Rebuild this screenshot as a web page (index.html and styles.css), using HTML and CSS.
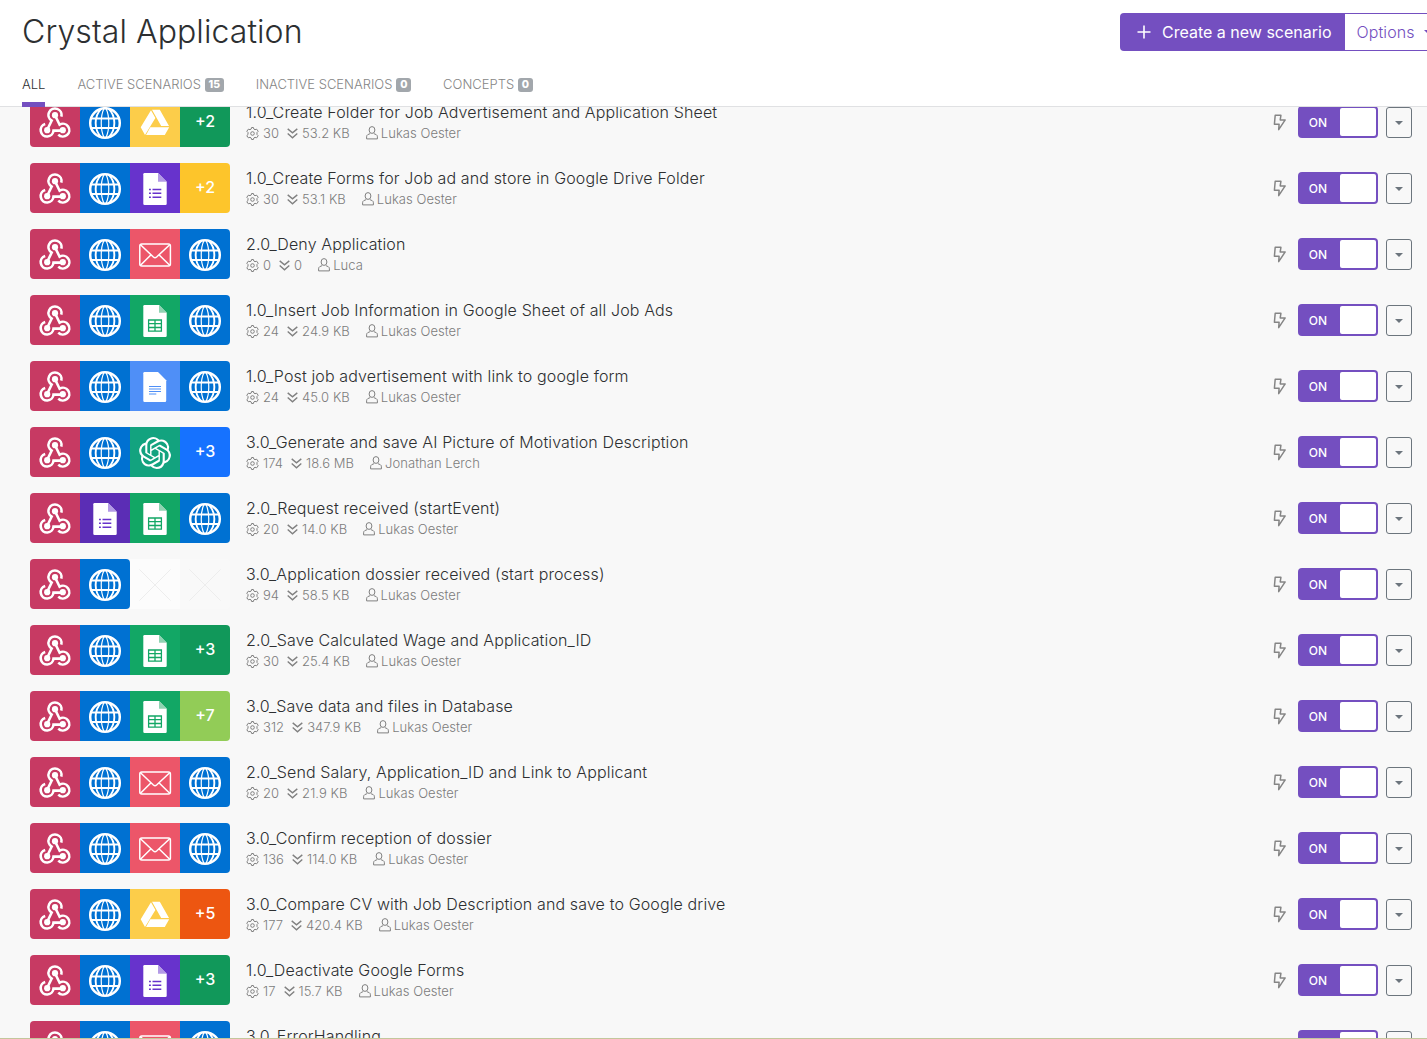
FILE: index.html
```html
<!DOCTYPE html>
<html lang="en">
<head>
<meta charset="utf-8">
<title>Crystal Application</title>
<link rel="stylesheet" href="styles.css">
</head>
<body>
<svg class="sprite" aria-hidden="true">
  <symbol id="hook" viewBox="0 0 50 50">
    <g fill="none" stroke="#fff" stroke-width="2.6">
      <path d="M31.3 19.6A6.5 6.5 0 1 0 21.7 23.6L17.6 32"/>
      <path d="M15.2 27A6.4 6.4 0 1 0 23.5 33.6H32.7"/>
      <path d="M25 18.2L29.6 27.7A6.4 6.4 0 1 1 28.3 37.6"/>
    </g>
    <g fill="#fff"><circle cx="25" cy="18.2" r="3.1"/><circle cx="17.2" cy="33.2" r="3.1"/><circle cx="32.8" cy="33.2" r="3.1"/></g>
  </symbol>
  <symbol id="globe" viewBox="0 0 50 50">
    <g fill="none" stroke="#fff">
      <circle cx="25" cy="26" r="14.8" stroke-width="2.5"/>
      <path stroke-width="1.9" d="M10.500 21.500H39.500M10.500 31H39.500M21.500 11.600C13.700 19 13.700 33 21.500 40.400M28.500 11.600C36.300 19 36.300 33 28.500 40.400"/>
      <path stroke-width="1.2" d="M24 11.600C20.300 19 20.300 33 24 40.400M26 11.600C29.700 19 29.700 33 26 40.400"/>
    </g>
  </symbol>
  <symbol id="forms" viewBox="0 0 50 50">
    <path fill="#fff" d="M14.500 10H28L36.700 18.700V40.800Q36.700 42 35.500 42H14.500Q13.300 42 13.300 40.800V11.200Q13.300 10 14.500 10Z"/>
    <path fill="#b39ae6" d="M28 10L36.700 18.700H28Z"/>
    <path stroke="#6733cc" stroke-width="1.500" d="M19 26.500H20.900M22.500 26.500H31.300M19 30.300H20.900M22.500 30.300H31.300M19 34.200H20.900M22.500 34.200H31.300"/>
  </symbol>
  <symbol id="sheets" viewBox="0 0 50 50">
    <path fill="#fff" d="M14.500 10H29L36.700 17.700V40.800Q36.700 42 35.500 42H14.500Q13.300 42 13.300 40.800V11.200Q13.300 10 14.500 10Z"/>
    <path fill="#8fd3b2" d="M29 10L36.700 17.700H29Z"/>
    <path fill="none" stroke="#12a765" stroke-width="1.300" d="M18.600 25H31.400V36.200H18.600ZM25 25V36.200M18.600 28.700H31.400M18.600 32.500H31.400"/>
  </symbol>
  <symbol id="docs" viewBox="0 0 50 50">
    <path fill="#fff" d="M14.500 11H28L36.200 19.200V39.800Q36.200 41 35 41H14.500Q13.300 41 13.300 39.800V12.200Q13.300 11 14.500 11Z"/>
    <path stroke="#4f8ff7" stroke-width="1.200" d="M19 25.500H31M19 28H31M19 30.500H31M19 33H26.300"/>
  </symbol>
  <symbol id="mail" viewBox="0 0 50 50">
    <g fill="none" stroke="#fff" stroke-width="1.500" stroke-linejoin="round">
      <rect x="9.800" y="15" width="30.600" height="22" rx="2"/>
      <path d="M10.500 15.800L23.400 28Q25 29.400 26.600 28L39.700 15.800M10.500 36.300L20.800 26M39.700 36.300L29.200 26"/>
    </g>
  </symbol>
  <symbol id="drive" viewBox="0 0 50 50">
    <path fill="#fff" d="M21 13.200L25.400 21L15 38L10.700 30.300ZM22 12.700H29.800L39 28.900H31.200ZM20.300 30.300H39.200L34.800 38H16Z"/>
  </symbol>
  <symbol id="ai" viewBox="0 0 50 50">
    <path fill="#fff" transform="translate(9 10) scale(1.333)" d="M22.2819 9.8211a5.9847 5.9847 0 0 0-.5157-4.9108 6.0462 6.0462 0 0 0-6.5098-2.9A6.0651 6.0651 0 0 0 4.9807 4.1818a5.9847 5.9847 0 0 0-3.9977 2.9 6.0462 6.0462 0 0 0 .7427 7.0966 5.98 5.98 0 0 0 .511 4.9107 6.051 6.051 0 0 0 6.5146 2.9001A5.9847 5.9847 0 0 0 13.2599 24a6.0557 6.0557 0 0 0 5.7718-4.2058 5.9894 5.9894 0 0 0 3.9977-2.9001 6.0557 6.0557 0 0 0-.7475-7.0729zm-9.022 12.6081a4.4755 4.4755 0 0 1-2.8764-1.0408l.1419-.0804 4.7783-2.7582a.7948.7948 0 0 0 .3927-.6813v-6.7369l2.02 1.1686a.071.071 0 0 1 .038.052v5.5826a4.504 4.504 0 0 1-4.4945 4.4944zm-9.6607-4.1254a4.4708 4.4708 0 0 1-.5346-3.0137l.142.0852 4.783 2.7582a.7712.7712 0 0 0 .7806 0l5.8428-3.3685v2.3324a.0804.0804 0 0 1-.0332.0615L9.74 19.9502a4.4992 4.4992 0 0 1-6.1408-1.6464zM2.3408 7.8956a4.485 4.485 0 0 1 2.3655-1.9728V11.6a.7664.7664 0 0 0 .3879.6765l5.8144 3.3543-2.0201 1.1685a.0757.0757 0 0 1-.071 0l-4.8303-2.7865A4.504 4.504 0 0 1 2.3408 7.872zm16.5963 3.8558L13.1038 8.364 15.1192 7.2a.0757.0757 0 0 1 .071 0l4.8303 2.7913a4.4944 4.4944 0 0 1-.6765 8.1042v-5.6772a.79.79 0 0 0-.407-.667zm2.0107-3.0231l-.142-.0852-4.7735-2.7818a.7759.7759 0 0 0-.7854 0L9.409 9.2297V6.8974a.0662.0662 0 0 1 .0284-.0615l4.8303-2.7866a4.4992 4.4992 0 0 1 6.6802 4.66zM8.3065 12.863l-2.02-1.1638a.0804.0804 0 0 1-.038-.0567V6.0742a4.4992 4.4992 0 0 1 7.3757-3.4537l-.142.0805L8.704 5.459a.7948.7948 0 0 0-.3927.6813zm1.0976-2.3654l2.602-1.4998 2.6069 1.4998v2.9994l-2.5974 1.4997-2.6067-1.4997Z"/>
  </symbol>
  <symbol id="cross" viewBox="0 0 50 50"><path stroke="#ededed" d="M9.500 10.500L40.500 41.500M40.500 10.500L9.500 41.500"/></symbol>
  <symbol id="gear" viewBox="0 0 13 13">
    <g fill="none" stroke="#808080" stroke-width="1" stroke-linejoin="round">
      <path d="M5.200 2L5.600.5H7.400L7.800 2L9 2.700L10.700 2.200L12.200 4.300L11 5.500V7.500L12.200 8.700L10.700 10.800L9 10.300L7.800 11L7.400 12.500H5.600L5.200 11L4 10.300L2.300 10.800L.8 8.700L2 7.500V5.500L.8 4.300L2.300 2.200L4 2.700Z"/>
      <circle cx="6.500" cy="6.500" r="1.800"/>
    </g>
  </symbol>
  <symbol id="down" viewBox="0 0 11 11"><path fill="none" stroke="#808080" stroke-width="1.400" d="M.7 .9L5.500 4.800L10.300 .9M.7 5.500L5.500 9.800L10.300 5.500"/></symbol>
  <symbol id="user" viewBox="0 0 12 14"><g fill="none" stroke="#808080"><ellipse cx="6" cy="4" rx="2.900" ry="3.400"/><path stroke-linejoin="round" d="M4.200 7.600L1.700 8.700Q.6 9.300 .6 10.800V12.900H11.400V10.800Q11.400 9.300 10.300 8.700L7.800 7.600"/></g></symbol>
  <symbol id="bolt" viewBox="0 0 13 17"><path fill="none" stroke="#858585" stroke-width="1.500" stroke-linejoin="round" d="M2.200 1.300H7.900L7.200 5.900H12.200L5.700 15.600L6.100 10.300H1.400Z"/></symbol>
</svg>

<div class="page">
  <header class="header">
    <div class="bar">
      <h1 class="title">Crystal Application</h1>
      <div class="actions">
        <button class="create"><svg class="plus" viewBox="0 0 14 14"><path stroke="#fff" stroke-width="1.600" d="M7 .5V13.500M.5 7H13.500"/></svg>Create a new scenario</button>
        <button class="options">Options<i class="caret"></i></button>
      </div>
    </div>
    <nav class="tabs">
      <a class="tab active">ALL</a>
      <a class="tab">ACTIVE SCENARIOS<b class="count">15</b></a>
      <a class="tab">INACTIVE SCENARIOS<b class="count">0</b></a>
      <a class="tab">CONCEPTS<b class="count">0</b></a>
    </nav>
  </header>

  <main class="viewport">
    <div class="list">
      <div class="row">
        <div class="apps"><svg class="app rose"><use href="#hook"/></svg><svg class="app blue"><use href="#globe"/></svg><svg class="app yellow"><use href="#drive"/></svg><span class="app more green">+2</span></div>
        <div class="info"><div class="name">1.0_Create Folder for Job Advertisement and Application Sheet</div><div class="meta"><svg class="gear"><use href="#gear"/></svg><span class="ops">30</span><svg class="down"><use href="#down"/></svg><span class="size">53.2 KB</span><svg class="user"><use href="#user"/></svg><span>Lukas Oester</span></div></div>
        <svg class="bolt"><use href="#bolt"/></svg><div class="toggle"><span>ON</span><i class="knob"></i></div><button class="menu"><i class="caret"></i></button>
      </div>
      <div class="row">
        <div class="apps"><svg class="app rose"><use href="#hook"/></svg><svg class="app blue"><use href="#globe"/></svg><svg class="app violet"><use href="#forms"/></svg><span class="app more amber">+2</span></div>
        <div class="info"><div class="name">1.0_Create Forms for Job ad and store in Google Drive Folder</div><div class="meta"><svg class="gear"><use href="#gear"/></svg><span class="ops">30</span><svg class="down"><use href="#down"/></svg><span class="size">53.1 KB</span><svg class="user"><use href="#user"/></svg><span>Lukas Oester</span></div></div>
        <svg class="bolt"><use href="#bolt"/></svg><div class="toggle"><span>ON</span><i class="knob"></i></div><button class="menu"><i class="caret"></i></button>
      </div>
      <div class="row">
        <div class="apps"><svg class="app rose"><use href="#hook"/></svg><svg class="app blue"><use href="#globe"/></svg><svg class="app coral"><use href="#mail"/></svg><svg class="app blue"><use href="#globe"/></svg></div>
        <div class="info"><div class="name">2.0_Deny Application</div><div class="meta"><svg class="gear"><use href="#gear"/></svg><span class="ops">0</span><svg class="down"><use href="#down"/></svg><span class="size">0</span><svg class="user"><use href="#user"/></svg><span>Luca</span></div></div>
        <svg class="bolt"><use href="#bolt"/></svg><div class="toggle"><span>ON</span><i class="knob"></i></div><button class="menu"><i class="caret"></i></button>
      </div>
      <div class="row">
        <div class="apps"><svg class="app rose"><use href="#hook"/></svg><svg class="app blue"><use href="#globe"/></svg><svg class="app sheet"><use href="#sheets"/></svg><svg class="app blue"><use href="#globe"/></svg></div>
        <div class="info"><div class="name">1.0_Insert Job Information in Google Sheet of all Job Ads</div><div class="meta"><svg class="gear"><use href="#gear"/></svg><span class="ops">24</span><svg class="down"><use href="#down"/></svg><span class="size">24.9 KB</span><svg class="user"><use href="#user"/></svg><span>Lukas Oester</span></div></div>
        <svg class="bolt"><use href="#bolt"/></svg><div class="toggle"><span>ON</span><i class="knob"></i></div><button class="menu"><i class="caret"></i></button>
      </div>
      <div class="row">
        <div class="apps"><svg class="app rose"><use href="#hook"/></svg><svg class="app blue"><use href="#globe"/></svg><svg class="app sky"><use href="#docs"/></svg><svg class="app blue"><use href="#globe"/></svg></div>
        <div class="info"><div class="name">1.0_Post job advertisement with link to google form</div><div class="meta"><svg class="gear"><use href="#gear"/></svg><span class="ops">24</span><svg class="down"><use href="#down"/></svg><span class="size">45.0 KB</span><svg class="user"><use href="#user"/></svg><span>Lukas Oester</span></div></div>
        <svg class="bolt"><use href="#bolt"/></svg><div class="toggle"><span>ON</span><i class="knob"></i></div><button class="menu"><i class="caret"></i></button>
      </div>
      <div class="row">
        <div class="apps"><svg class="app rose"><use href="#hook"/></svg><svg class="app blue"><use href="#globe"/></svg><svg class="app teal"><use href="#ai"/></svg><span class="app more azure">+3</span></div>
        <div class="info"><div class="name">3.0_Generate and save AI Picture of Motivation Description</div><div class="meta"><svg class="gear"><use href="#gear"/></svg><span class="ops">174</span><svg class="down"><use href="#down"/></svg><span class="size">18.6 MB</span><svg class="user"><use href="#user"/></svg><span>Jonathan Lerch</span></div></div>
        <svg class="bolt"><use href="#bolt"/></svg><div class="toggle"><span>ON</span><i class="knob"></i></div><button class="menu"><i class="caret"></i></button>
      </div>
      <div class="row">
        <div class="apps"><svg class="app rose"><use href="#hook"/></svg><svg class="app indigo"><use href="#forms"/></svg><svg class="app sheet"><use href="#sheets"/></svg><svg class="app blue"><use href="#globe"/></svg></div>
        <div class="info"><div class="name">2.0_Request received (startEvent)</div><div class="meta"><svg class="gear"><use href="#gear"/></svg><span class="ops">20</span><svg class="down"><use href="#down"/></svg><span class="size">14.0 KB</span><svg class="user"><use href="#user"/></svg><span>Lukas Oester</span></div></div>
        <svg class="bolt"><use href="#bolt"/></svg><div class="toggle"><span>ON</span><i class="knob"></i></div><button class="menu"><i class="caret"></i></button>
      </div>
      <div class="row">
        <div class="apps"><svg class="app rose"><use href="#hook"/></svg><svg class="app blue last"><use href="#globe"/></svg><svg class="app empty"><use href="#cross"/></svg><svg class="app empty faint"><use href="#cross"/></svg></div>
        <div class="info"><div class="name">3.0_Application dossier received (start process)</div><div class="meta"><svg class="gear"><use href="#gear"/></svg><span class="ops">94</span><svg class="down"><use href="#down"/></svg><span class="size">58.5 KB</span><svg class="user"><use href="#user"/></svg><span>Lukas Oester</span></div></div>
        <svg class="bolt"><use href="#bolt"/></svg><div class="toggle"><span>ON</span><i class="knob"></i></div><button class="menu"><i class="caret"></i></button>
      </div>
      <div class="row">
        <div class="apps"><svg class="app rose"><use href="#hook"/></svg><svg class="app blue"><use href="#globe"/></svg><svg class="app sheet"><use href="#sheets"/></svg><span class="app more green">+3</span></div>
        <div class="info"><div class="name">2.0_Save Calculated Wage and Application_ID</div><div class="meta"><svg class="gear"><use href="#gear"/></svg><span class="ops">30</span><svg class="down"><use href="#down"/></svg><span class="size">25.4 KB</span><svg class="user"><use href="#user"/></svg><span>Lukas Oester</span></div></div>
        <svg class="bolt"><use href="#bolt"/></svg><div class="toggle"><span>ON</span><i class="knob"></i></div><button class="menu"><i class="caret"></i></button>
      </div>
      <div class="row">
        <div class="apps"><svg class="app rose"><use href="#hook"/></svg><svg class="app blue"><use href="#globe"/></svg><svg class="app sheet"><use href="#sheets"/></svg><span class="app more lime">+7</span></div>
        <div class="info"><div class="name">3.0_Save data and files in Database</div><div class="meta"><svg class="gear"><use href="#gear"/></svg><span class="ops">312</span><svg class="down"><use href="#down"/></svg><span class="size">347.9 KB</span><svg class="user"><use href="#user"/></svg><span>Lukas Oester</span></div></div>
        <svg class="bolt"><use href="#bolt"/></svg><div class="toggle"><span>ON</span><i class="knob"></i></div><button class="menu"><i class="caret"></i></button>
      </div>
      <div class="row">
        <div class="apps"><svg class="app rose"><use href="#hook"/></svg><svg class="app blue"><use href="#globe"/></svg><svg class="app coral"><use href="#mail"/></svg><svg class="app blue"><use href="#globe"/></svg></div>
        <div class="info"><div class="name">2.0_Send Salary, Application_ID and Link to Applicant</div><div class="meta"><svg class="gear"><use href="#gear"/></svg><span class="ops">20</span><svg class="down"><use href="#down"/></svg><span class="size">21.9 KB</span><svg class="user"><use href="#user"/></svg><span>Lukas Oester</span></div></div>
        <svg class="bolt"><use href="#bolt"/></svg><div class="toggle"><span>ON</span><i class="knob"></i></div><button class="menu"><i class="caret"></i></button>
      </div>
      <div class="row">
        <div class="apps"><svg class="app rose"><use href="#hook"/></svg><svg class="app blue"><use href="#globe"/></svg><svg class="app coral"><use href="#mail"/></svg><svg class="app blue"><use href="#globe"/></svg></div>
        <div class="info"><div class="name">3.0_Confirm reception of dossier</div><div class="meta"><svg class="gear"><use href="#gear"/></svg><span class="ops">136</span><svg class="down"><use href="#down"/></svg><span class="size">114.0 KB</span><svg class="user"><use href="#user"/></svg><span>Lukas Oester</span></div></div>
        <svg class="bolt"><use href="#bolt"/></svg><div class="toggle"><span>ON</span><i class="knob"></i></div><button class="menu"><i class="caret"></i></button>
      </div>
      <div class="row">
        <div class="apps"><svg class="app rose"><use href="#hook"/></svg><svg class="app blue"><use href="#globe"/></svg><svg class="app yellow"><use href="#drive"/></svg><span class="app more orange">+5</span></div>
        <div class="info"><div class="name">3.0_Compare CV with Job Description and save to Google drive</div><div class="meta"><svg class="gear"><use href="#gear"/></svg><span class="ops">177</span><svg class="down"><use href="#down"/></svg><span class="size">420.4 KB</span><svg class="user"><use href="#user"/></svg><span>Lukas Oester</span></div></div>
        <svg class="bolt"><use href="#bolt"/></svg><div class="toggle"><span>ON</span><i class="knob"></i></div><button class="menu"><i class="caret"></i></button>
      </div>
      <div class="row">
        <div class="apps"><svg class="app rose"><use href="#hook"/></svg><svg class="app blue"><use href="#globe"/></svg><svg class="app violet"><use href="#forms"/></svg><span class="app more green">+3</span></div>
        <div class="info"><div class="name">1.0_Deactivate Google Forms</div><div class="meta"><svg class="gear"><use href="#gear"/></svg><span class="ops">17</span><svg class="down"><use href="#down"/></svg><span class="size">15.7 KB</span><svg class="user"><use href="#user"/></svg><span>Lukas Oester</span></div></div>
        <svg class="bolt"><use href="#bolt"/></svg><div class="toggle"><span>ON</span><i class="knob"></i></div><button class="menu"><i class="caret"></i></button>
      </div>
      <div class="row">
        <div class="apps"><svg class="app rose"><use href="#hook"/></svg><svg class="app blue"><use href="#globe"/></svg><svg class="app coral"><use href="#mail"/></svg><svg class="app blue"><use href="#globe"/></svg></div>
        <div class="info"><div class="name">3.0_ErrorHandling</div></div>
        <div class="toggle"><span></span><i class="knob"></i></div><button class="menu"></button>
      </div>
    </div>
  </main>
</div>
</body>
</html>
```
FILE: styles.css
```css
* { box-sizing: border-box; }
body { margin: 0; font-family: Inter, "Liberation Sans", sans-serif; font-weight: 300; background: #fff; overflow: hidden; }
button { font: inherit; margin: 0; padding: 0; }
.sprite { display: none; }
.page { height: 1039px; display: flex; flex-direction: column; overflow: hidden; border-bottom: 1px solid #c3c79c; }

.header { height: 107px; flex: none; display: flex; flex-direction: column; justify-content: space-between; border-bottom: 1px solid #e0e1e3; }
.bar { display: flex; justify-content: space-between; padding: 13px 0 0 22px; }
.title { margin: 0; font-size: 32px; line-height: 38px; font-weight: 300; color: #2d2f31; letter-spacing: .08px; }
.actions { display: flex; width: 307px; height: 38px; overflow: hidden; }
.create { flex: none; width: 225px; padding-left: 17px; display: flex; align-items: center; border: 0; border-radius: 4px 0 0 4px; background: #744fc0; color: #fff; font-size: 16px; font-weight: 400; white-space: nowrap; }
.plus { width: 14px; height: 14px; margin-right: 11px; }
.options { flex: none; width: 100px; padding-left: 11.500px; display: flex; align-items: center; gap: 9px; border: 1px solid #744fc0; border-left: 0; background: #fff; color: #744fc0; font-size: 16px; letter-spacing: .1px; }
.caret { width: 0; height: 0; border: 4px solid transparent; border-top-color: currentColor; border-bottom: 0; }

.tabs { display: flex; gap: 32px; margin-bottom: -1px; padding-left: 22px; font-size: 13px; line-height: 16px; color: #858585; }
.tab { height: 31px; display: flex; align-items: flex-start; }
.active { color: #2d2f31; border-bottom: 5px solid #744fc0; }
.count { margin: 2px 0 0 4px; padding: 0 3.700px; height: 14px; border-radius: 3px; background: #a2a7ac; color: #fff; font-size: 10.500px; line-height: 14px; font-weight: 800; }

.viewport { flex: 1; min-height: 0; overflow: hidden; background: #f8f8f8; }
.list { margin-top: -10px; }
.row { height: 66px; display: flex; align-items: flex-start; padding: 0 15px 0 30px; }
.apps { display: flex; width: 200px; height: 50px; flex: none; border-radius: 4px; overflow: hidden; }
.app { width: 50px; height: 50px; flex: none; display: block; }
.more { color: #fff; font-size: 16px; line-height: 49px; font-weight: 500; text-align: center; }
.rose { background: #c73a63; }
.blue { background: #0071d2; }
.yellow { background: #fccd4a; }
.green { background: #11985a; }
.violet { background: #6733cc; }
.amber { background: #fdc52b; }
.coral { background: #ec5669; }
.sheet { background: #12a765; }
.sky { background: #4f8ff7; }
.teal { background: #13a37f; }
.azure { background: #1672ff; }
.indigo { background: #5b2db5; }
.lime { background: #92cc57; }
.orange { background: #ed5611; }
.last { border-radius: 0 4px 4px 0; }
.empty { background: #fcfcfc; }
.faint { background: #f9f9f9; }

.info { flex: 1; margin-left: 16px; white-space: nowrap; }
.name { height: 20px; margin-top: 5px; font-size: 16px; line-height: 20px; color: #2d2f31; letter-spacing: .13px; }
.meta { display: flex; align-items: center; height: 20px; margin-top: 1px; font-size: 13px; line-height: 20px; color: #7c7c7c; letter-spacing: .05px; }
.gear { width: 13px; height: 13px; margin-right: 4px; }
.down { width: 11px; height: 11px; margin: 0 4px 0 8px; }
.user { width: 12px; height: 14px; margin: 0 3px 0 16px; }

.bolt { width: 13px; height: 17px; margin: 17px 12px 0 0; }
.toggle { width: 80px; height: 32px; margin: 9px 8px 0 0; padding: 2px; display: flex; justify-content: space-between; border-radius: 4px; background: #744fc0; color: #fff; font-size: 12px; line-height: 29px; font-weight: 500; }
.toggle span { width: 36px; text-align: center; }
.knob { width: 36px; height: 28px; border-radius: 2px; background: #fff; }
.menu { width: 26px; height: 31px; margin-top: 10px; display: flex; align-items: center; justify-content: center; border: 1px solid #6c757d; border-radius: 3px; background: transparent; color: #6c757d; }
```
